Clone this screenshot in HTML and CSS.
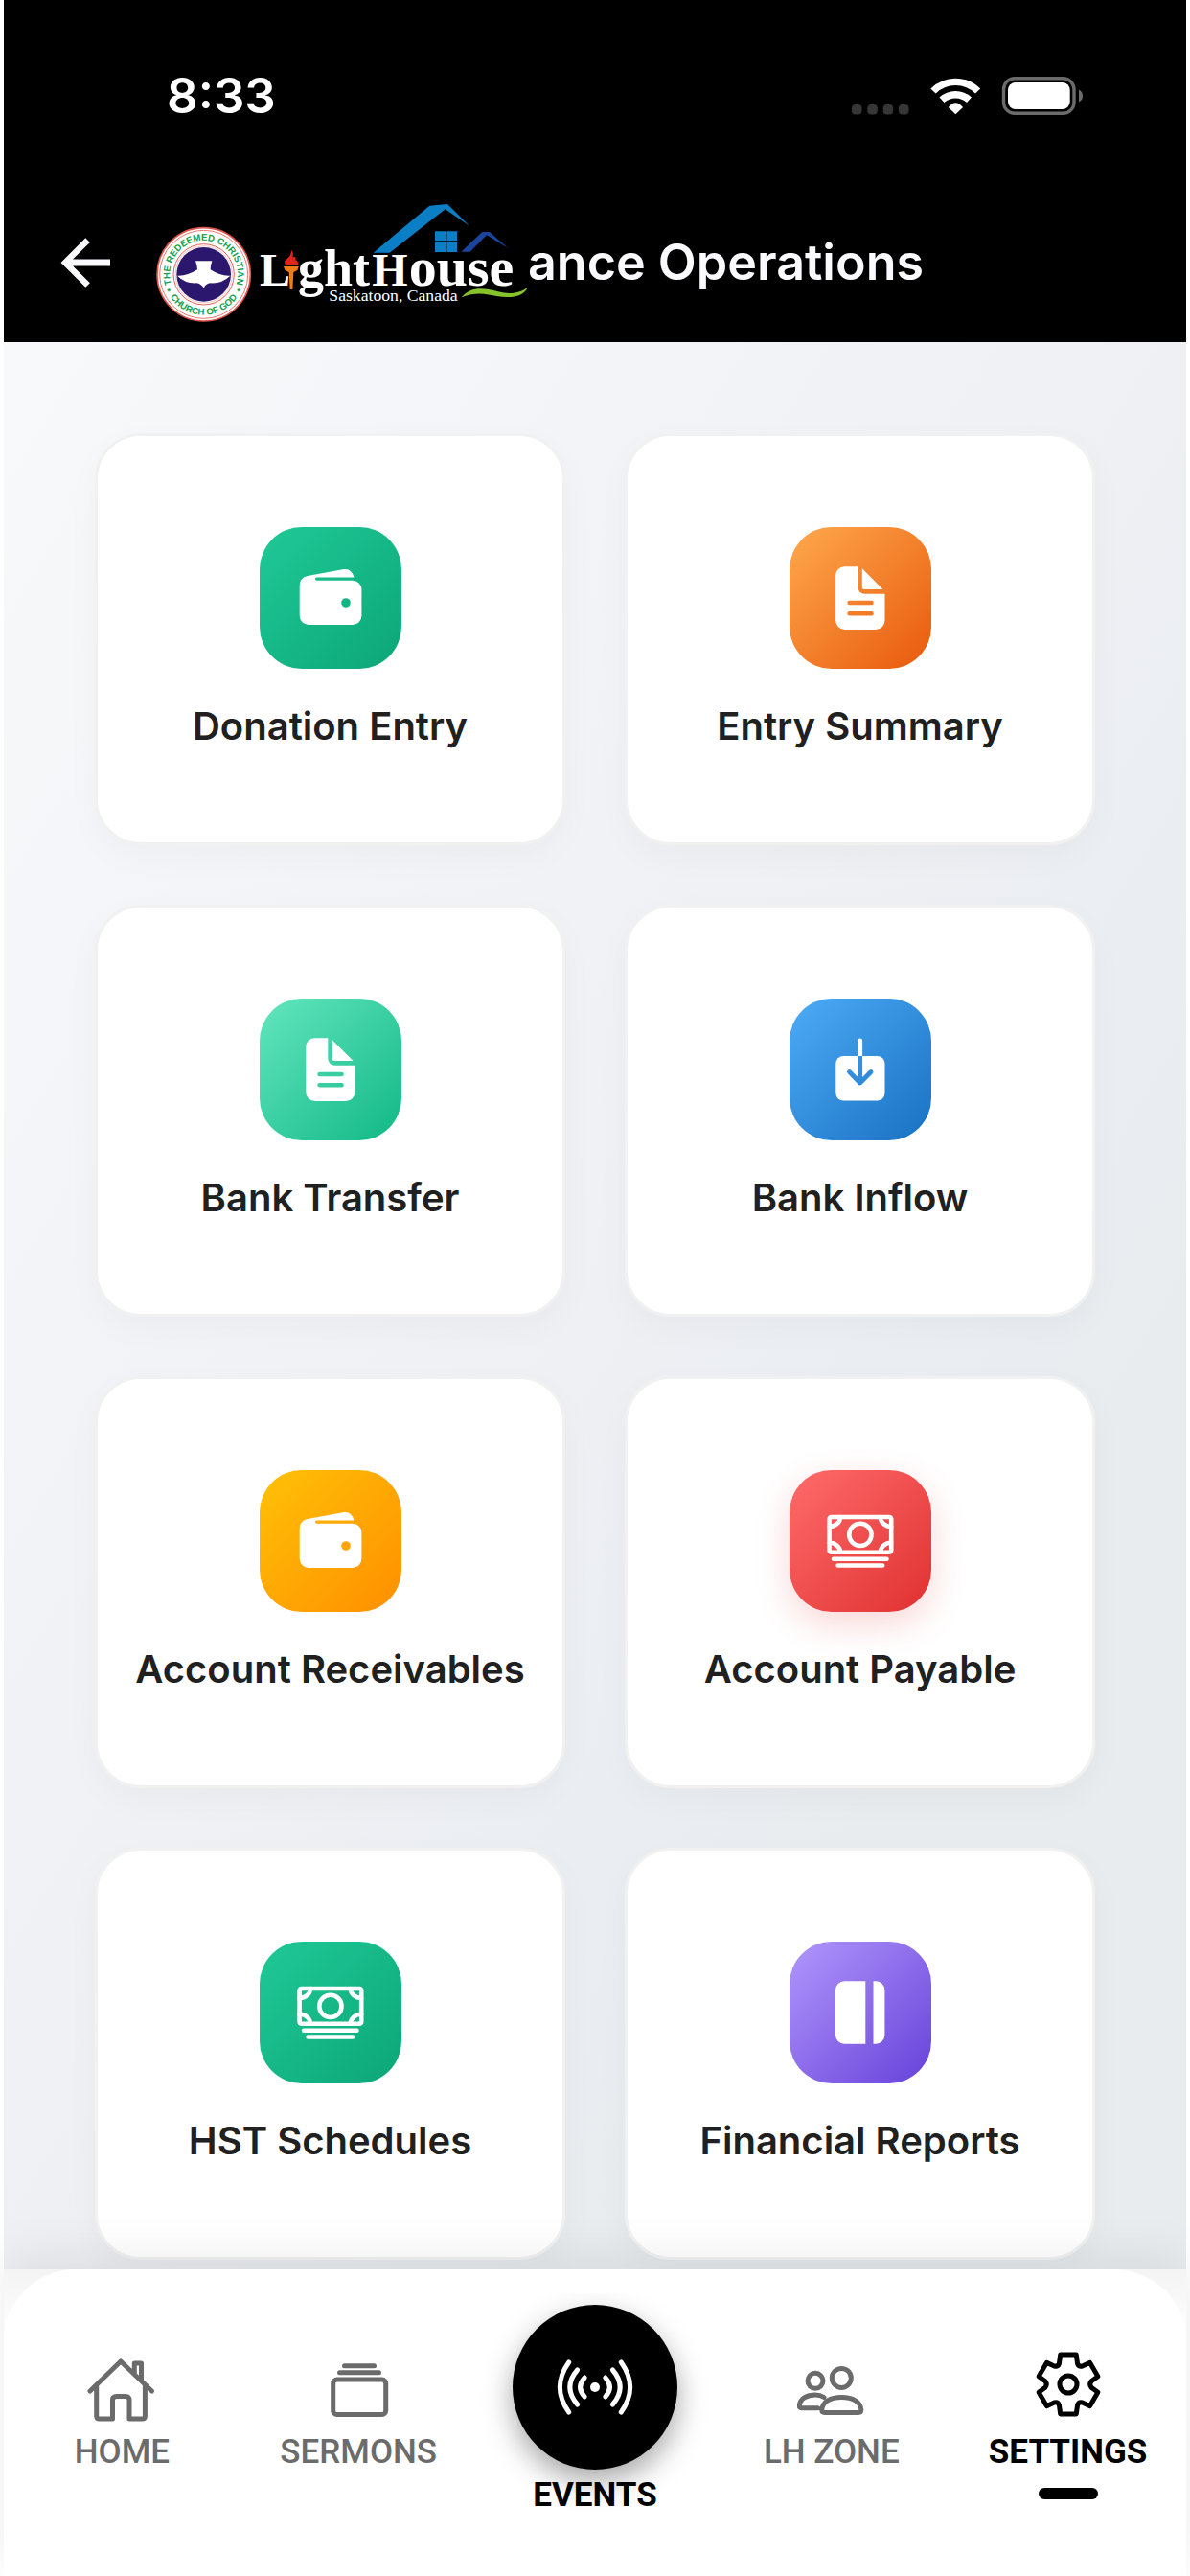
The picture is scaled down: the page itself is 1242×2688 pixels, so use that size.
FILE: index.html
```html
<!DOCTYPE html>
<html lang="en">
<head>
<meta charset="utf-8">
<meta name="viewport" content="width=device-width, initial-scale=1">
<title>Finance Operations</title>
<link rel="stylesheet" href="styles.css">
</head>
<body>
<svg class="defs" width="0" height="0" aria-hidden="true">
  <defs>
    <mask id="doc-cut">
      <rect width="148" height="148" fill="#fff"/>
      <path d="M62.600 79H85.500M62.600 90.300H85.500" stroke="#000" stroke-width="4.600" stroke-linecap="round"/>
    </mask>
    <mask id="inflow-cut">
      <rect width="148" height="148" fill="#fff"/>
      <path d="M73.700 60V86M62.500 76.500L73.700 88L85 76.500" fill="none" stroke="#000" stroke-width="4.800" stroke-linecap="round" stroke-linejoin="round"/>
      <rect x="66" y="40" width="16" height="20" fill="#fff"/>
    </mask>
    <symbol id="wallet" viewBox="0 0 148 148">
      <path fill="#fff" fill-rule="evenodd" d="M41.700 62Q41.700 52.500 50 51L88 44Q96 43 98.500 52.500H59.600a1.600 1.600 0 0 0 0 3.200H97a9.400 9.400 0 0 1 9.400 9.400V92.600a9.400 9.400 0 0 1-9.400 9.400H51.100a9.400 9.400 0 0 1-9.400-9.400ZM90 74.200a4.800 4.800 0 1 0 0 9.600a4.800 4.800 0 1 0 0-9.600Z"/>
    </symbol>
    <symbol id="doc" viewBox="0 0 148 148">
      <g fill="#fff" mask="url(#doc-cut)">
        <path d="M57.200 41.300H71.300V62.700a7 7 0 0 0 7 7H99.500V97.500a9.500 9.500 0 0 1-9.500 9.500H57.700a9.500 9.500 0 0 1-9.500-9.500V50.300a9 9 0 0 1 9-9Z"/>
        <path d="M75.800 43.300L97.500 65H78a2.200 2.200 0 0 1-2.200-2.200Z"/>
      </g>
    </symbol>
    <symbol id="inflow" viewBox="0 0 148 148">
      <g fill="#fff" mask="url(#inflow-cut)">
        <path d="M71.300 60V44a2.400 2.400 0 0 1 4.800 0V60Z"/>
        <rect x="48.300" y="60" width="51.200" height="46.500" rx="8"/>
      </g>
    </symbol>
    <symbol id="cash" viewBox="0 0 148 148">
      <g fill="none" stroke="#fff" stroke-width="4.600" stroke-linecap="round">
        <rect x="41.600" y="49" width="64.600" height="36.800" rx="2"/>
        <circle cx="73.900" cy="67.400" r="11.600"/>
        <path d="M53 49a11.400 10 0 0 1-11.400 10M94.800 49a11.400 10 0 0 0 11.400 10M53 85.800a11.400 10 0 0 0-11.400-10M94.800 85.800a11.400 10 0 0 1 11.400-10M46 92.700H101.500M50.600 99.500H97.200"/>
      </g>
    </symbol>
    <symbol id="journal" viewBox="0 0 148 148">
      <path fill="#fff" d="M57.200 41.300H79.300V106.700H57.200a9.200 9.200 0 0 1-9.200-9.200V50.500a9.200 9.200 0 0 1 9.200-9.200ZM87.500 41.300H90.200a9.200 9.200 0 0 1 9.200 9.200V97.500a9.200 9.200 0 0 1-9.200 9.200H87.500Z"/>
    </symbol>
  </defs>
</svg>

<div class="screen">
  <header class="header">
    <div class="status">
      <span class="clock">8:33</span>
      <svg class="indicators" viewBox="889 78 242 44" aria-label="Wi-Fi on, battery full" role="img">
        <g fill="#363636">
          <rect x="889" y="109" width="10.500" height="10.500" rx="4"/>
          <rect x="905.300" y="109" width="10.500" height="10.500" rx="4"/>
          <rect x="921.700" y="109" width="10.500" height="10.500" rx="4"/>
          <rect x="938" y="109" width="10.500" height="10.500" rx="4"/>
        </g>
        <g fill="none" stroke="#fff" stroke-width="7.400">
          <path d="M974 95A33 33 0 0 1 1020.600 95"/>
          <path d="M983 104.300A21 21 0 0 1 1011.500 104.300"/>
        </g>
        <path fill="#fff" d="M989.800 112Q997.300 102.500 1005 112L997.300 119.300Z"/>
        <rect x="1047.500" y="81.800" width="73.500" height="36.400" rx="11.500" fill="none" stroke="#6b6b6b" stroke-width="3.400"/>
        <rect x="1052" y="86" width="64.700" height="28" rx="8" fill="#fff"/>
        <path fill="#6b6b6b" d="M1126 93.500Q1130 95.500 1130 100T1126 106.500Z"/>
      </svg>
    </div>
    <div class="toolbar">
      <button class="back" type="button" aria-label="Back">
        <svg viewBox="0 0 24 24"><path fill="#fafafe" d="M20 10.900V13.100H8L13.500 18.500L12.080 19.920L4.160 12L12.080 4.080L13.500 5.500L8 10.900H20Z"/></svg>
      </button>
      <svg class="logo" viewBox="39 30 1164 378" role="img" aria-label="LightHouse Saskatoon, Canada">
        <defs>
          <path id="ring-top" d="M90 296A106 106 0 1 1 286 296"/>
          <path id="ring-bottom" d="M69.600 300A126 126 0 0 0 306.400 300"/>
        </defs>
        <circle cx="188" cy="256" r="146" fill="#fff" stroke="#e0524a" stroke-width="5"/>
        <circle cx="188" cy="256" r="138" fill="none" stroke="#e8776f" stroke-width="3"/>
        <circle cx="188" cy="256" r="95" fill="none" stroke="#e0625a" stroke-width="3"/>
        <circle cx="188" cy="256" r="89" fill="none" stroke="#eca39e" stroke-width="2"/>
        <circle cx="188" cy="256" r="85" fill="#2b176e"/>
        <path fill="#fff" d="M162 214H214Q208 230 209 241Q240 262 271 260Q245 285 210 283Q193 285 188 299Q180 285 165 283Q130 285 105 260Q135 262 168 241Q168 230 162 214Z"/>
        <g class="ring">
          <text text-anchor="middle"><textPath href="#ring-top" startOffset="50%">THE REDEEMED CHRISTIAN</textPath></text>
          <text text-anchor="middle"><textPath href="#ring-bottom" startOffset="50%">CHURCH OF GOD</textPath></text>
          <text x="73" y="319">*</text>
          <text x="292" y="319">*</text>
        </g>
        <path fill="#0a7fc6" d="M719 188L895 41L951 36L1020 104L944 52L770 188Z"/>
        <path fill="#0a7fc6" d="M912 121H945V151H912ZM949 121H981V151H949ZM912 155H945V186H912ZM949 155H981V186H949Z"/>
        <path fill="#1b459c" d="M994 185L1060 123H1083L1141 174L1074 133L1022 185Z"/>
        <path fill="#e02418" d="M444 227Q436 212 450 206Q462 196 463 179Q470 190 466 202Q478 198 475 210Q484 214 484 227Z"/>
        <path fill="#ef7d17" d="M438 231H485L481 243L469 249L466 303H458L455 249L442 243Z"/>
        <g class="wordmark">
          <text x="363" y="292" class="cap">L</text>
          <text x="483" y="292">ght</text>
          <text x="715" y="292" class="cap">H</text>
          <text x="830" y="292" class="end">ouse</text>
        </g>
        <text x="580" y="340" class="place">Saskatoon, Canada</text>
        <path fill="#86c32a" d="M995 328C1025 292 1065 298 1110 310C1150 321 1180 313 1202 297C1190 326 1150 332 1105 324C1065 316 1040 311 995 328Z"/>
      </svg>
      <h1 class="title">ance Operations</h1>
    </div>
  </header>

  <main class="grid">
    <a class="card" href="#donation-entry"><span class="tile green"><svg><use href="#wallet"/></svg></span><span class="label">Donation Entry</span></a>
    <a class="card" href="#entry-summary"><span class="tile orange"><svg><use href="#doc"/></svg></span><span class="label">Entry Summary</span></a>
    <a class="card" href="#bank-transfer"><span class="tile mint"><svg><use href="#doc"/></svg></span><span class="label">Bank Transfer</span></a>
    <a class="card" href="#bank-inflow"><span class="tile blue"><svg><use href="#inflow"/></svg></span><span class="label">Bank Inflow</span></a>
    <a class="card" href="#receivables"><span class="tile amber"><svg><use href="#wallet"/></svg></span><span class="label">Account Receivables</span></a>
    <a class="card" href="#payable"><span class="tile red"><svg><use href="#cash"/></svg></span><span class="label">Account Payable</span></a>
    <a class="card" href="#hst"><span class="tile green"><svg><use href="#cash"/></svg></span><span class="label">HST Schedules</span></a>
    <a class="card" href="#reports"><span class="tile purple"><svg><use href="#journal"/></svg></span><span class="label">Financial Reports</span></a>
  </main>

  <div class="dock">
    <nav class="tabs">
      <a class="tab" href="#home">
        <svg class="tab-icon" viewBox="0 -6 72 80"><path d="M3 37L35 6L67.500 37M9.700 31V63q0 3 3 3H26.500V46.500q0-4 4-4H40q4 0 4 4V66H57.400q3 0 3-3V31M49.300 19V8H56.500V26"/></svg>
        <span>HOME</span>
      </a>
      <a class="tab" href="#sermons">
        <svg class="tab-icon" viewBox="0 -6 72 80"><rect x="9.700" y="25" width="55" height="36.500" rx="4"/><path d="M16.500 17.700H57.500M21.500 10.700H52.500"/></svg>
        <span>SERMONS</span>
      </a>
      <a class="tab events" href="#events">
        <span class="disc"><svg viewBox="-86 -86 172 172"><path d="M-27.300-26Q-46 0-27.300 26M-18.400-18Q-34 0-18.400 18M-10.800-10Q-20 0-10.800 10M27.300-26Q46 0 27.300 26M18.400-18Q34 0 18.400 18M10.800-10Q20 0 10.800 10"/><circle r="5"/></svg></span>
        <span>EVENTS</span>
      </a>
      <a class="tab" href="#zone">
        <svg class="tab-icon" viewBox="0 -6 72 80"><circle cx="46.300" cy="23.400" r="10"/><circle cx="19" cy="26.300" r="8"/><path d="M25.800 57C26 48 35 43.500 46.300 43.500S66.600 48 66.800 57q0 2.400-3 2.400H28.800q-3 0-3-2.400ZM21.500 54.700H4.500q-2.400 0-2.200-2.400C3 45 10 41 19 41q5 0 9 2.500"/></svg>
        <span>LH ZONE</span>
      </a>
      <a class="tab active" href="#settings" aria-current="page">
        <svg class="tab-icon" viewBox="0 -6 72 80"><g transform="translate(36 30)"><path d="M-8.300-30.900H8.300L9.600-21.500Q11-18 14.600-19L22.600-22.600L30.900-8.300L24-3.200Q21.500 0 24 3.200L30.900 8.300L22.600 22.600L14.600 19Q11 18 9.600 21.500L8.300 30.900H-8.300L-9.600 21.500Q-11 18-14.600 19L-22.600 22.600L-30.900 8.300L-24 3.200Q-21.500 0-24-3.200L-30.900-8.300L-22.600-22.600L-14.600-19Q-11-18-9.600-21.500Z"/><circle r="9"/></g></svg>
        <span>SETTINGS</span>
      </a>
    </nav>
  </div>
</div>
</body>
</html>
```
FILE: styles.css
```css
* {
  box-sizing: border-box;
}

body {
  margin: 0;
  background: #fff;
  font-family: Inter, "Liberation Sans", sans-serif;
}

a {
  color: inherit;
  text-decoration: none;
}

svg {
  display: block;
}

.defs {
  position: absolute;
}

.screen {
  display: flex;
  flex-direction: column;
  min-height: 100vh;
  margin: 0 4px;
}

/* Header */
.header {
  padding-bottom: 10px;
  background: #000;
  color: #fff;
}

.status {
  display: flex;
  align-items: center;
  justify-content: space-between;
  height: 200px;
  padding: 0 107px 0 170px;
}

.clock {
  font-size: 51px;
  font-weight: 600;
  line-height: 60px;
}

.indicators {
  width: 242px;
  height: 44px;
}

.toolbar {
  display: flex;
  align-items: center;
  height: 147px;
  padding-left: 46px;
}

.back {
  width: 78px;
  height: 78px;
  margin-right: 35px;
  padding: 0;
  border: 0;
  background: none;
}

.logo {
  flex: none;
  width: 388px;
  height: 126px;
}

.ring {
  fill: #16a050;
  font: bold 29px "Liberation Sans", sans-serif;
}

.wordmark {
  fill: #fff;
  font: bold 162px "Liberation Serif", serif;
}

.wordmark .cap {
  font-size: 144px;
}

.wordmark .end {
  font-size: 174px;
}

.place {
  fill: #fff;
  font: 53px "Liberation Serif", serif;
}

.title {
  margin: 0;
  color: #fafafe;
  font-size: 52px;
  font-weight: 600;
  line-height: 60px;
  white-space: nowrap;
}

/* Menu cards */
.grid {
  display: grid;
  flex: 1;
  grid-template-columns: 1fr 1fr;
  align-content: start;
  gap: 62px;
  padding: 95px 95px 10px;
  background: linear-gradient(to bottom right, #f8f9fb 0%, #eef0f4 50%, #e8ecef 75%, #e8ecef 100%);
}

.card {
  display: flex;
  flex-direction: column;
  align-items: center;
  gap: 36px;
  padding: 95px 12px 97px;
  border: 3px solid #f1f1f1;
  border-radius: 48px;
  background: #fff;
  box-shadow: 0 12px 36px rgba(0, 0, 0, 0.03);
}

.tile {
  width: 148px;
  height: 148px;
  border-radius: 44px;
}

.tile svg {
  width: 148px;
  height: 148px;
}

.green { background: linear-gradient(135deg, #20c997, #0ca678); }
.orange { background: linear-gradient(135deg, #ffa94d, #e8590c); }
.mint { background: linear-gradient(135deg, #63e6be, #12b886); }
.blue { background: linear-gradient(135deg, #4dabf7, #1971c2); }
.amber { background: linear-gradient(135deg, #ffc107, #ff8f00); }
.purple { background: linear-gradient(135deg, #b197fc, #6741d9); }
.red {
  background: linear-gradient(135deg, #ff6b6b, #e03131);
  box-shadow: 0 12px 36px rgba(224, 49, 49, 0.2);
}

.label {
  color: #202020;
  font-size: 40px;
  font-weight: 600;
  line-height: 48px;
  text-align: center;
}

/* Bottom tab bar */
.dock {
  background: linear-gradient(#f4f4f4, #fff 75px);
  box-shadow: 0 -12px 48px rgba(0, 0, 0, 0.08);
}

.tabs {
  display: grid;
  grid-template-columns: repeat(5, 1fr);
  height: 320px;
  border-radius: 75px 75px 0 0;
  background: #fff;
}

.tab {
  display: flex;
  flex-direction: column;
  align-items: center;
  gap: 7px;
  padding-top: 84px;
  color: #6b6b6b;
  font-family: Roboto, sans-serif;
  font-size: 35px;
  font-weight: 500;
  line-height: 40px;
}

.tab-icon {
  width: 72px;
  height: 80px;
  fill: none;
  stroke: currentColor;
  stroke-width: 5;
  stroke-linecap: round;
  stroke-linejoin: round;
}

.active,
.events {
  color: #000;
  font-weight: 700;
}

.active::after {
  width: 62px;
  height: 12px;
  margin-top: 10px;
  border-radius: 6px;
  background: #000;
  content: "";
}

.events {
  margin-top: 25px;
  padding-top: 12px;
  overflow: hidden;
}

.disc {
  width: 172px;
  height: 172px;
  border-radius: 50%;
  background: #000;
  box-shadow: 0 12px 30px rgba(0, 0, 0, 0.35);
}

.disc svg {
  fill: none;
  stroke: #fff;
  stroke-width: 5;
  stroke-linecap: round;
}

.disc circle {
  fill: #fff;
  stroke: none;
}
```
